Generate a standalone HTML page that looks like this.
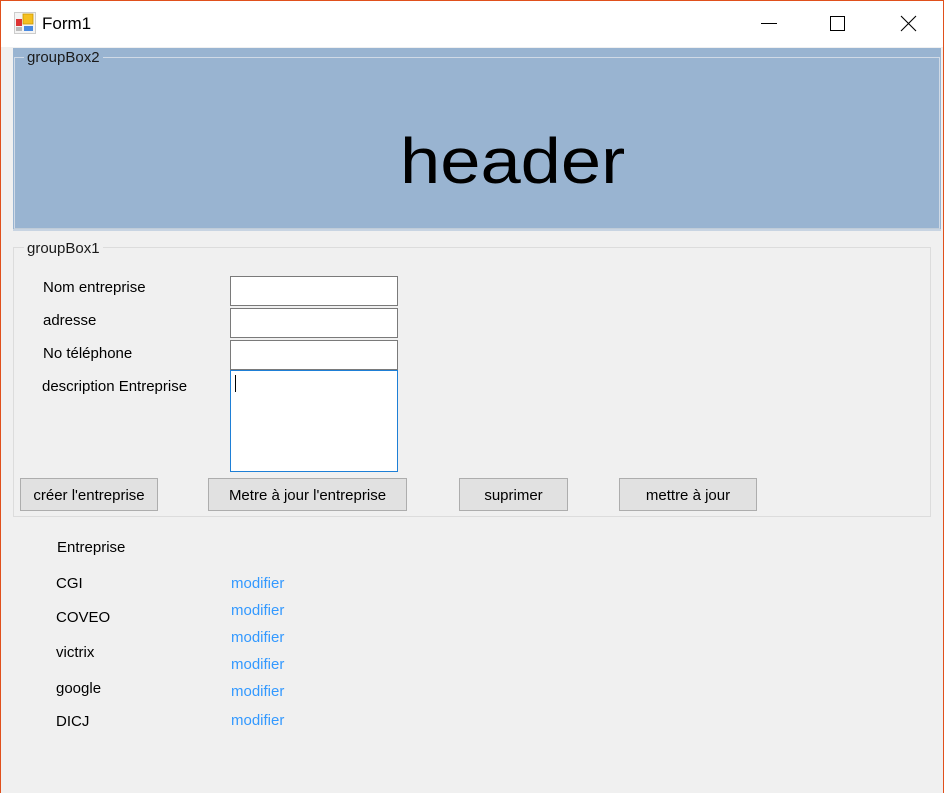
<!DOCTYPE html>
<html><head><meta charset="utf-8"><style>
*{margin:0;padding:0;box-sizing:border-box}
body{width:944px;height:793px;overflow:hidden;background:#f0f0f0;font-family:"Liberation Sans",sans-serif;font-size:15px;color:#000;position:relative}
.a{position:absolute;white-space:nowrap;line-height:18px}
.win{position:absolute;left:0;top:0;width:944px;height:793px;border:1px solid #e0501c;border-bottom:none}
.title{position:absolute;left:1px;top:1px;width:942px;height:46px;background:#fff}
.tb{position:absolute;background:#fff;border:1px solid #7a7a7a}
.btn{position:absolute;background:#e1e1e1;border:1px solid #adadad;text-align:center;line-height:33px;font-size:15px}
.lnk{color:#3399ff}
</style></head><body>
<div class="title"></div>
<svg class="a" style="left:14px;top:12px" width="22" height="22" viewBox="0 0 22 22">
<rect x="0.5" y="0.5" width="21" height="21" fill="#f4f4f4" stroke="#ccc"/>
<rect x="2" y="7" width="6" height="7" fill="#d33"/>
<rect x="9" y="2" width="10" height="10" fill="#f5c020" stroke="#c90" stroke-width="0.8"/>
<rect x="10" y="14" width="9" height="5" fill="#4a8ae0"/>
<rect x="2" y="15" width="6" height="4" fill="#bbb"/>
</svg>
<div class="a" style="left:42px;top:14px;font-size:17px;line-height:20px">Form1</div>
<div class="a" style="left:761px;top:23px;width:16px;height:1px;background:#000"></div>
<div class="a" style="left:830px;top:16px;width:15px;height:15px;border:1px solid #000"></div>
<svg class="a" style="left:900px;top:15px" width="17" height="17" viewBox="0 0 17 17"><path d="M1 1L16 16M16 1L1 16" stroke="#000" stroke-width="1.1"/></svg>

<div class="a" style="left:13px;top:48px;width:928px;height:183px;background:#99b4d1;border-bottom:2px solid #c8d4e2"></div>
<div class="a" style="left:14px;top:57px;width:926px;height:172px;border:1px solid #d0dae6;border-bottom-color:#c0ccd8"></div>
<div class="a" style="left:24px;top:49px;padding:0 3px;background:#99b4d1;color:#1a1a1a">groupBox2</div>
<div class="a" style="left:400px;top:124px;font-size:64px;line-height:74px;transform:scaleX(1.13);transform-origin:0 0">header</div>

<div class="a" style="left:13px;top:247px;width:918px;height:270px;border:1px solid #dcdcdc"></div>
<div class="a" style="left:24px;top:240px;padding:0 3px;background:#f0f0f0;color:#1a1a1a">groupBox1</div>

<div class="a" style="left:43px;top:279px">Nom entreprise</div>
<div class="a" style="left:43px;top:312px">adresse</div>
<div class="a" style="left:43px;top:345px">No téléphone</div>
<div class="a" style="left:42px;top:378px">description Entreprise</div>
<div class="tb" style="left:230px;top:276px;width:168px;height:30px"></div>
<div class="tb" style="left:230px;top:308px;width:168px;height:30px"></div>
<div class="tb" style="left:230px;top:340px;width:168px;height:30px"></div>
<div class="tb" style="left:230px;top:370px;width:168px;height:102px;border-color:#1e7fd6"></div>
<div class="a" style="left:235px;top:375px;width:1px;height:17px;background:#000"></div>

<div class="btn" style="left:20px;top:478px;width:138px;height:33px">créer l'entreprise</div>
<div class="btn" style="left:208px;top:478px;width:199px;height:33px">Metre à jour l'entreprise</div>
<div class="btn" style="left:459px;top:478px;width:109px;height:33px">suprimer</div>
<div class="btn" style="left:619px;top:478px;width:138px;height:33px">mettre à jour</div>

<div class="a" style="left:57px;top:539px">Entreprise</div>
<div class="a" style="left:56px;top:575px">CGI</div>
<div class="a" style="left:56px;top:609px">COVEO</div>
<div class="a" style="left:56px;top:644px">victrix</div>
<div class="a" style="left:56px;top:680px">google</div>
<div class="a" style="left:56px;top:713px">DICJ</div>
<div class="a lnk" style="left:231px;top:575px">modifier</div>
<div class="a lnk" style="left:231px;top:602px">modifier</div>
<div class="a lnk" style="left:231px;top:629px">modifier</div>
<div class="a lnk" style="left:231px;top:656px">modifier</div>
<div class="a lnk" style="left:231px;top:683px">modifier</div>
<div class="a lnk" style="left:231px;top:712px">modifier</div>
<div class="win"></div>
</body></html>
